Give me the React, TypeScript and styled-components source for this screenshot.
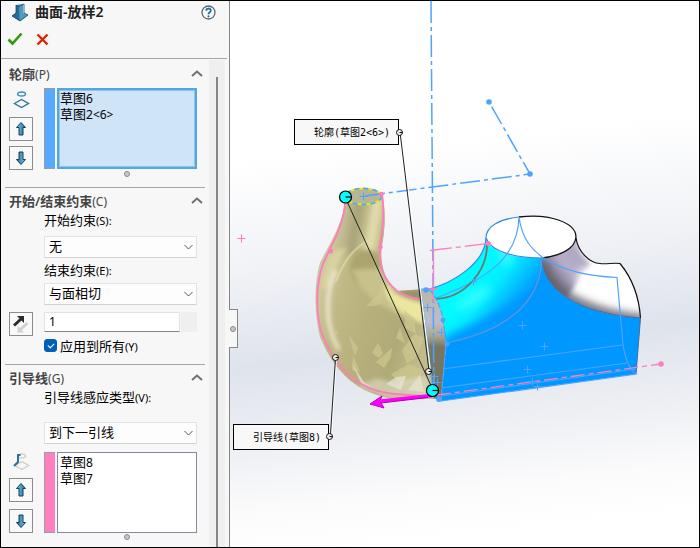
import React, { useState } from "react";
import styled, { createGlobalStyle } from "styled-components";

const Global = createGlobalStyle`
  *, *::before, *::after { box-sizing: border-box; }
  body {
    margin: 0;
    font-family: "Noto Sans", "Noto Sans CJK SC", sans-serif;
    font-size: 13px;
    color: #000;
  }
  button, input, select { font: inherit; color: inherit; margin: 0; }
`;

const Window = styled.div`
  display: flex;
  height: 100vh;
  min-height: 548px;
  border: 1px solid #000;
  background: #fff;
`;

const Panel = styled.aside`
  flex: none;
  width: 229px;
  display: flex;
  flex-direction: column;
  background: #f7f7f7;
  border-right: 1px solid #868686;
`;

const TitleBar = styled.header`
  display: flex;
  align-items: center;
  height: 23px;
  padding: 0 13px 0 10px;
  gap: 6px;
`;

const Title = styled.h1`
  flex: 1;
  margin: 0;
  font-size: 14px;
  line-height: 18px;
  padding-bottom: 2px;
  font-weight: 600;
  color: #222;
`;

const PlainButton = styled.button`
  display: flex;
  padding: 0;
  border: 0;
  background: none;
`;

const Actions = styled.div`
  display: flex;
  align-items: center;
  gap: 13px;
  height: 34px;
  padding: 0 6px 4px;
`;

const Scroller = styled.div`
  flex: 1;
  display: flex;
  min-height: 0;
  margin-right: 2px;
  border-top: 1px solid #a6a6a6;
`;

const Groups = styled.div`
  flex: 1;
  min-width: 0;
  padding: 0 4px;
`;

const ScrollTrack = styled.div`
  flex: none;
  width: 16px;
  padding: 17px 7px 0;
  margin: 1px 2px 0 0;
  background: #efefef;
  display: flex;
`;

const ScrollThumb = styled.div`
  flex: 1;
  background: #858585;
`;

const Group = styled.section`
  padding-bottom: 9px;
  & + & { border-top: 1px solid #a8a8a8; }
`;

const GroupHead = styled.h2<{ $first?: boolean }>`
  display: flex;
  align-items: center;
  justify-content: space-between;
  margin: 0;
  padding: 0 2px 0 4px;
  height: ${(p) => (p.$first ? 29 : 25)}px;
  font-size: 13px;
  font-weight: 500;
  color: #444;
`;

const Key = styled.span`
  font-size: 11px;
  font-weight: 400;
`;

const HeadKey = styled(Key)`
  font-size: 12px;
`;

const Heading = styled.span`
  font-weight: 600;
`;

const Row = styled.div`
  display: flex;
  align-items: flex-start;
  padding-right: 8px;
`;

const Gutter = styled.div<{ $loose?: boolean }>`
  flex: none;
  width: 39px;
  padding-left: 4px;
  display: flex;
  flex-direction: column;
  gap: ${(p) => (p.$loose ? 7 : 5)}px;
`;

const GlyphCell = styled.div<{ $short?: boolean }>`
  width: 24px;
  height: ${(p) => (p.$short ? 19 : 24)}px;
  display: grid;
  place-items: center;
`;

const IconButton = styled.button`
  width: 24px;
  height: 24px;
  padding: 0;
  display: grid;
  place-items: center;
  border: 1px solid #8c8c8c;
  background: #f9f9f9;
`;

const ColorBar = styled.div<{ $color: string }>`
  flex: none;
  width: 11px;
  height: 81px;
  margin-right: 2px;
  border: 1px solid #a09aa0;
  border-right: 0;
  background: ${(p) => p.$color};
`;

const ListBox = styled.ul<{ $active?: boolean }>`
  flex: 1;
  height: 81px;
  margin: 0;
  padding: ${(p) => (p.$active ? "0 1px" : "1px 2px")};
  list-style: none;
  border: ${(p) => (p.$active ? "2px solid #4fa9e0" : "1px solid #858aa0")};
  box-shadow: ${(p) => (p.$active ? "inset 0 0 0 1px #90c4ec" : "none")};
  background: ${(p) => (p.$active ? "#d0e4f8" : "#fff")};
`;

const ListItem = styled.li`
  height: 16px;
  line-height: 16px;
  white-space: nowrap;
`;

const Small = styled.span`
  font-size: 12px;
`;

const Grip = styled.div`
  width: 6px;
  height: 6px;
  margin: 1px 75px 1px auto;
  border: 1px solid #8a8a8a;
  border-radius: 50%;
  background: #c8c8c8;
`;

const Field = styled.div`
  padding: 0 8px 0 39px;
`;

const Label = styled.label<{ $gap: number }>`
  display: block;
  height: 20px;
  line-height: 14px;
  margin-bottom: ${(p) => p.$gap}px;
`;

const SelectWrap = styled.div<{ $gap: number }>`
  position: relative;
  height: 22px;
  margin-bottom: ${(p) => p.$gap}px;
  svg {
    position: absolute;
    right: 4px;
    top: 8px;
    pointer-events: none;
  }
`;

const Select = styled.select`
  appearance: none;
  display: block;
  width: 100%;
  height: 22px;
  padding: 0 20px 2px 4px;
  border: 1px solid #e2e2e2;
  border-bottom-color: #d2d2d2;
  border-radius: 1px;
  background: #fdfdfd;
`;

const NumberInput = styled.input`
  flex: 1;
  min-width: 0;
  height: 20px;
  padding: 0 4px 2px;
  font-size: 12px;
  border: 1px solid #e2e2e2;
  border-bottom-color: #868686;
  border-radius: 1px;
  background: #fff;
`;

const Spinner = styled.div`
  width: 16px;
  height: 20px;
  margin-left: 1px;
  background: #efefef;
`;

const CheckRow = styled.label`
  display: flex;
  align-items: center;
  gap: 3px;
  height: 19px;
  margin-left: 39px;
`;

const CheckBox = styled.input`
  appearance: none;
  width: 13px;
  height: 13px;
  border-radius: 3px;
  border: 1px solid #005fb8;
  display: grid;
  place-items: center;
  &:checked { background: #005fb8; }
  &:checked::before {
    content: "";
    width: 6px;
    height: 4px;
    margin-top: -2px;
    border-left: 1px solid #fff;
    border-bottom: 1px solid #fff;
    transform: rotate(-45deg);
  }
`;

const Viewport = styled.main`
  position: relative;
  flex: 1;
  min-width: 0;
  background: linear-gradient(174deg, #fff 0%, #fff 27%, #f0f2f6 46%, #dfe3ec 62%, #eef0f4 76%, #fbfbfc 86%, #fff 94%);
`;

const Scene = styled.svg`
  display: block;
  width: 100%;
  height: 100%;
`;

const SplitHandle = styled.button`
  position: absolute;
  left: -1px;
  top: 308px;
  width: 9px;
  height: 39px;
  padding: 0;
  display: grid;
  place-items: center;
  border: 1px solid #868686;
  border-left: 0;
  background: #f7f7f7;
  &::before {
    content: "";
    width: 6px;
    height: 6px;
    border: 1px solid #8a8a8a;
    border-radius: 50%;
    background: #c8c8c8;
  }
`;

const ArrowIcon = ({ down = false }: { down?: boolean }) => (
  <svg width="12" height="16" viewBox="0 0 12 16">
    <defs>
      <linearGradient id="arrowFill" x1="0" x2="1">
        <stop offset="0" stopColor="#7cc4e4" />
        <stop offset="1" stopColor="#1d6f9c" />
      </linearGradient>
    </defs>
    <path
      d="M6 1.5 10.5 6.5H8V14H4V6.5H1.5Z"
      transform={down ? "rotate(180 6 8)" : undefined}
      fill="url(#arrowFill)"
      stroke="#123f5c"
      strokeLinejoin="round"
    />
  </svg>
);

const Caret = () => (
  <svg width="12" height="7" viewBox="0 0 12 7" fill="none" stroke="#707070" strokeWidth="2">
    <path d="M1 6 6 1.5 11 6" />
  </svg>
);

const DropCaret = () => (
  <svg width="9" height="6" viewBox="0 0 9 6" fill="none" stroke="#555">
    <path d="M.5 1 4.5 5 8.5 1" />
  </svg>
);

const LoftIcon = () => (
  <svg width="18" height="19" viewBox="0 0 18 19">
    <path d="M5 2 12 1V10L17 12 9 18 1 13 5 10Z" fill="#3d87ad" />
    <path d="M5 2 8 3V15L9 18 1 13 5 10Z" fill="#2a6a8f" />
    <path d="M8 3 12 1V10L17 12 9 18Z" fill="#4c9bc0" />
    <path d="M5 2.5 8 3.5 13 1M5 2V10L1 13 9 18 17 12 13 10V1" fill="none" stroke="#1c4a68" strokeWidth=".8" />
  </svg>
);

const HelpIcon = () => (
  <svg width="15" height="15" viewBox="0 0 15 15">
    <circle cx="7.5" cy="7.5" r="6.5" fill="#fafafa" stroke="#5c6670" strokeWidth="1.3" />
    <path d="M5.2 5.8C5.2 2.8 9.8 2.8 9.8 5.6 9.8 7.3 7.5 7.3 7.5 9.2" fill="none" stroke="#1f7199" strokeWidth="1.8" />
    <circle cx="7.5" cy="11.3" r="1.1" fill="#1f7199" />
  </svg>
);

const ProfileIcon = () => (
  <svg width="17" height="18" viewBox="0 0 17 18" fill="none" stroke="#2a7394" strokeWidth="1.4">
    <ellipse cx="8.5" cy="3" rx="4" ry="2" stroke="#3490b6" />
    <path d="M1.5 12.5 8.5 8.5 15.5 12.5 8.5 16.5Z" />
  </svg>
);

const GuideIcon = () => (
  <svg width="17" height="18" viewBox="0 0 17 18" fill="none" strokeWidth="1.4">
    <ellipse cx="8.5" cy="3" rx="4" ry="2" stroke="#cfcfcf" />
    <path d="M2 12.5 9 8.5 15.5 12.5 9 16.5Z" stroke="#cfcfcf" />
    <path d="M7.5 2H5V9L1 13" stroke="#2a7394" strokeWidth="2" />
  </svg>
);

const ReverseIcon = () => (
  <svg width="18" height="20" viewBox="0 0 18 20">
    <path d="M5 2H12V9L9.500 6.500 3 12.500 1 10.500 7.500 4.500Z" fill="#2b2b2b" />
    <path d="M12 18.500H5.500V12L7.800 14 14.500 8 16.500 10 9.800 16.300Z" fill="#d2d2d2" />
  </svg>
);

const BLUE = "#4fa3ff";
const PINK = "#ff7dbd";

const Cross = ({ x, y, c = BLUE }: { x: number; y: number; c?: string }) => (
  <path d={`M${x - 4} ${y}h8M${x} ${y - 4}v8`} stroke={c} fill="none" />
);

const Handle = ({ x, y }: { x: number; y: number }) => (
  <g stroke="#000" strokeWidth="1.2">
    <circle cx={x} cy={y} r="6" fill="#00ffff" />
    <path d={`M${x} ${y}h6`} />
  </g>
);

const Anchor = ({ x, y }: { x: number; y: number }) => (
  <g stroke="#111">
    <circle cx={x} cy={y} r="3" fill="#eee" />
    <path d={`M${x} ${y}h3`} />
  </g>
);

const SAND_EDGE = "M345 203C344 225 331 246 323 264 315 286 316 316 322 334 337 371 360 391 395 394L434 397";

const Model = () => (
  <Scene viewBox="230 1 469 546" preserveAspectRatio="xMinYMin meet" role="img" aria-label="曲面-放样2">
    <defs>
      <linearGradient id="sand" gradientUnits="userSpaceOnUse" x1="318" y1="300" x2="430" y2="330">
        <stop offset="0" stopColor="#cdc79c" />
        <stop offset=".18" stopColor="#c0b986" />
        <stop offset=".45" stopColor="#b7b07d" />
        <stop offset=".75" stopColor="#b0aa78" />
        <stop offset="1" stopColor="#c2bc8c" />
      </linearGradient>
      <linearGradient id="neck" gradientUnits="userSpaceOnUse" x1="343" y1="225" x2="384" y2="232">
        <stop offset="0" stopColor="#c5bf93" />
        <stop offset=".3" stopColor="#a8a27a" />
        <stop offset=".5" stopColor="#bdb787" />
        <stop offset=".7" stopColor="#e4e0b2" />
        <stop offset=".85" stopColor="#d5cf96" />
        <stop offset="1" stopColor="#b5ae7d" />
      </linearGradient>
      <linearGradient id="cyanFade" gradientUnits="userSpaceOnUse" x1="478" y1="276" x2="519" y2="308">
        <stop offset="0" stopColor="#00fbff" />
        <stop offset=".35" stopColor="#04ecff" />
        <stop offset="1" stopColor="#0098ff" />
      </linearGradient>
      <linearGradient id="section" x1="0" y1="0" x2="0" y2="1">
        <stop offset="0" stopColor="#b9b7a2" />
        <stop offset=".3" stopColor="#bcbccb" />
        <stop offset=".42" stopColor="#aaa893" />
        <stop offset=".52" stopColor="#787763" />
        <stop offset="1" stopColor="#74735f" />
      </linearGradient>
      <linearGradient id="steel" gradientUnits="userSpaceOnUse" x1="545" y1="275" x2="588" y2="242">
        <stop offset="0" stopColor="#6a6876" />
        <stop offset=".4" stopColor="#b7aecb" />
        <stop offset=".7" stopColor="#b0a8c0" />
        <stop offset="1" stopColor="#f0eef5" />
      </linearGradient>
      <filter id="soft4" x="-30%" y="-30%" width="160%" height="160%"><feGaussianBlur stdDeviation="4" /></filter>
      <filter id="soft2" x="-30%" y="-30%" width="160%" height="160%"><feGaussianBlur stdDeviation="2" /></filter>
      <clipPath id="sandClip">
        <path d="M345 197C345 222 329 244 320 263 314 283 314 314 320 337 335 373 358 394 395 399L437 399 430 340 424 289 397 291C386 283 379 265 382 245 386 225 385 205 382 192Z" />
      </clipPath>
      <clipPath id="steelClip">
        <path d="M542 258Q570 252 576 238C578 252 590 263 600 263.500 606 264.500 614 262.500 620 263.500 632 278 639 296 640.500 318 595 315 543 298 542 258Z" />
      </clipPath>
      <clipPath id="cyanClip">
        <path d="M428 289C455 283 485 262 486 238 492 253 517 258 542 258 541 285 525 320 447 343Q443 310 428 289Z" />
      </clipPath>
    </defs>

    <g clipPath="url(#sandClip)">
      <rect x="310" y="180" width="135" height="222" fill="url(#sand)" />
      <path d="M340 185H390V240Q383 252 372 252 352 250 335 262Z" fill="url(#neck)" filter="url(#soft2)" />
      <g filter="url(#soft2)">
        <ellipse cx="366" cy="268" rx="16" ry="18" fill="#aca570" />
        <path d="M352 270Q368 312 432 324L430 306Q396 296 381 268Z" fill="#c7c18c" />
        <path d="M384 282Q400 300 430 304L432 326Q396 318 384 290Z" fill="#ebe79f" />
        <path d="M348 248Q335 262 331 286L322 290Q321 268 335 250Z" fill="#d9d3a2" />
        <path d="M392 291 422 290 424 301Q404 300 388 288Z" fill="#989168" />
      </g>
      <path d="M369 240Q346 252 336 282" fill="none" stroke="#e4dfa8" strokeWidth="2" opacity=".6" />
      <path d="M336 270Q325 292 329 322 332 338 339 350" fill="none" stroke="#f6f3de" strokeWidth="4" opacity=".8" filter="url(#soft2)" />
      <g fill="#cec88f" opacity=".7">
        <path d="M366 306 378 294 388 282 380 304 373 306Z" />
        <path d="M348 334 358 348 355 356Z" />
        <path d="M372 353 378 343 383 353 379 358Z" />
        <path d="M376 362 392 348 391 357 384 368Z" />
        <path d="M396 338 400 327 405 343Z" />
        <path d="M402 350 414 334 424 338 417 356 407 364Z" />
        <path d="M391 374 409 364 423 370 417 382 402 386Z" />
        <path d="M353 356 360 372 352 370Z" />
        <path d="M335 329 339 334 335 334Z" />
        <path d="M404 310 414 318 416 334 405 328Z" />
      </g>
      <path d="M357 386 378 378 393 383 427 375 432 399 385 397Z" fill="#dedec8" opacity=".6" filter="url(#soft2)" />
      <g fill="#e8e6d4" opacity=".7">
        <path d="M386 384 396 377 406 376 401 390Z" />
        <path d="M408 390 420 375 424 392Z" />
        <path d="M352 364 364 382 375 390 361 383Z" />
      </g>
    </g>
    <ellipse cx="363.500" cy="196.500" rx="18" ry="8" fill="#b8b595" stroke="#ece420" strokeWidth="1.800" />
    <ellipse cx="363.500" cy="196.500" rx="18" ry="8" fill="none" stroke={BLUE} strokeWidth="1.800" strokeDasharray="5 4" />
    <path d={SAND_EDGE} fill="none" stroke={PINK} strokeWidth="1.800" />
    <path d="M382 194C385 215 382 230 380 247 379 268 384 280 397 291 410 299 420 300 436 299" fill="none" stroke={PINK} strokeWidth="1.800" />

    <path d="M428 289C455 283 485 262 486 238 492 253 517 258 542 258 543 298 595 315 640.500 318L636 374 441 401 446 345Q443 310 428 289Z" fill="#0098ff" />
    <g clipPath="url(#cyanClip)">
      <rect x="425" y="235" width="120" height="110" fill="url(#cyanFade)" />
      <path d="M436 350 450 334 478 322 502 308 532 290 540 350Z" fill="#0098ff" filter="url(#soft4)" />
      <ellipse cx="506" cy="254" rx="6" ry="12" fill="#5cffff" opacity=".6" filter="url(#soft4)" />
      <ellipse cx="474" cy="298" rx="20" ry="7" fill="#40ffff" opacity=".7" filter="url(#soft4)" transform="rotate(-32 474 298)" />
    </g>
    <g clipPath="url(#steelClip)">
      <rect x="540" y="235" width="105" height="85" fill="#fff" />
      <path d="M540 255 576 235 582 254 591 264 565 300 540 295Z" fill="url(#steel)" filter="url(#soft2)" />
      <path d="M580 270Q606 260 640 270L640 306 606 306Q584 298 577 280Z" fill="#fff" filter="url(#soft4)" />
      <path d="M542 262C547 300 605 317 645 320" fill="none" stroke="#656371" strokeWidth="10" filter="url(#soft4)" />
    </g>
    <ellipse cx="531" cy="237" rx="45" ry="20.500" fill="#fff" />
    <path d="M519 217C550 213 576 223 576 237 575 249 560 256 542 258" fill="none" stroke="#111" strokeWidth="1.300" />
    <path d="M576 238C578 252 590 263 600 263.500 606 264.500 614 262.500 620 263.500 632 278 639 296 640.500 318" fill="none" stroke="#111" strokeWidth="1.200" />
    <path d="M542 258C543 298 595 315 640.500 318L636 374" fill="none" stroke="#456b99" />
    <g fill="none" stroke={BLUE} strokeWidth="1.200">
      <path d="M519 217C500 219 486 226 486 238 492 253 517 258 542 258" stroke="#318be8" />
      <path d="M426 290C455 283 485 262 486 238" stroke="#318be8" />
      <path d="M519 217C518 265 475 284 423 303M519 217C522 240 533 250 542 257 565 272 590 276 617 277.500L623 345Q627 368 636 374" />
      <path d="M542 258C541 295 518 328 447 343" stroke="#6895d8" />
      <path d="M435 370 622 345M441 388 627 363M441 396 636 369M441 401 637 374" />
    </g>
    <path d="M487 245C487 270 466 298 435 299" fill="none" stroke="#78716f" strokeWidth="1.800" />

    <path d="M421 289 430 290Q440 302 443 319L446 344 441 400 434 398Z" fill="url(#section)" stroke={BLUE} strokeWidth="1.200" strokeDasharray="6 2" />

    <g fill="none" stroke={BLUE} strokeWidth="1.500">
      <path d="M431 1 434 400" strokeDasharray="22 4 4 4" />
      <path d="M365 196 530 174 489 102" strokeDasharray="20 4 4 4" />
    </g>
    <g fill={BLUE}>
      <circle cx="530" cy="174" r="2.800" /><circle cx="489" cy="102" r="2.800" />
      <circle cx="426" cy="290" r="2.800" /><circle cx="443" cy="320" r="2.500" /><circle cx="447" cy="344" r="2.500" />
      <circle cx="439" cy="399" r="3" />
    </g>
    <g fill="none" stroke={PINK} strokeWidth="1.300">
      <path d="M430 250.500 488 243.500" strokeDasharray="22 4 5 4" />
      <path d="M433.500 249V302M429 289H438" />
      <path d="M437 395 661 364" strokeDasharray="14 4 5 4" />
    </g>
    <g fill={PINK}>
      <circle cx="488.500" cy="243.500" r="2.500" /><circle cx="661" cy="364" r="2.800" />
      <circle cx="381.500" cy="194" r="2.300" /><circle cx="380.500" cy="247" r="2.300" /><circle cx="330.500" cy="251" r="2.500" />
    </g>
    <Cross x={241.5} y={238.5} c={PINK} />
    <Cross x={363.5} y={196.5} />
    <Cross x={427.5} y={307.5} />
    <Cross x={441.5} y={332.5} />
    <Cross x={522.5} y={325.5} />
    <Cross x={544.5} y={346.5} />
    <Cross x={527.5} y={369.5} />
    <Cross x={532.5} y={381.5} />
    <Cross x={537.5} y={386.5} />
    <Cross x={434.5} y={376.5} />
    <Cross x={437.5} y={382.5} />
    <Cross x={473.5} y={281.5} />

    <path d="M381 401 432 395.500" stroke="#ff00ff" strokeWidth="3.500" />
    <path d="M381 403 428 397.500" stroke="#a800a8" />
    <path d="M370 404 382 396 380 401 384 408Z" fill="#ff00ff" stroke="#c000c0" />

    <g fill="none">
      <path d="M401.500 133 430.500 371M331.500 434 336.500 358" stroke="#fff" />
      <path d="M345 197 433 390M400 132 429 371M330.500 434 335.500 358" stroke="#222" />
    </g>
    <Handle x={345.500} y={197} />
    <Handle x={432.500} y={390.500} />

    <g fontFamily='"DejaVu Sans Mono", "Noto Sans CJK SC", monospace' fontSize="10" fill="#000">
      <rect x="294.500" y="119.500" width="104" height="25" fill="#f8f8f8" stroke="#000" />
      <text x="314" y="136">轮廓(草图2&lt;6&gt;)</text>
      <rect x="233.500" y="424.500" width="95" height="25" fill="#f8f8f8" stroke="#000" />
      <text x="253" y="441">引导线(草图8)</text>
    </g>
    <Anchor x={399.500} y={132.500} />
    <Anchor x={329.500} y={436.500} />
    <Anchor x={335.500} y={357.500} />
    <Anchor x={428.500} y={371.500} />
  </Scene>
);

const GroupTitle = ({ text, hotkey, first }: { text: string; hotkey: string; first?: boolean }) => (
  <GroupHead $first={first}>
    <span><Heading>{text}</Heading><HeadKey>({hotkey})</HeadKey></span>
    <PlainButton aria-label={text}><Caret /></PlainButton>
  </GroupHead>
);

const Picker = ({ id, value, gap }: { id: string; value: string; gap: number }) => (
  <SelectWrap $gap={gap}>
    <Select id={id}><option>{value}</option></Select>
    <DropCaret />
  </SelectWrap>
);

const SketchList = ({ icon, color, items, active, loose }: {
  icon: React.ReactNode; color: string; items: [string, string][]; active?: boolean; loose?: boolean;
}) => (
  <>
    <Row>
      <Gutter $loose={loose}>
        <GlyphCell $short={loose}>{icon}</GlyphCell>
        <IconButton aria-label="上移"><ArrowIcon /></IconButton>
        <IconButton aria-label="下移"><ArrowIcon down /></IconButton>
      </Gutter>
      <ColorBar $color={color} />
      <ListBox $active={active}>
        {items.map(([name, suffix]) => (
          <ListItem key={suffix}>{name}<Small>{suffix}</Small></ListItem>
        ))}
      </ListBox>
    </Row>
    <Grip />
  </>
);

export default function App() {
  const [all, setAll] = useState(true);
  const [length, setLength] = useState("1");
  return (
    <>
      <Global />
      <Window>
        <Panel>
          <TitleBar>
            <LoftIcon />
            <Title>曲面-放样2</Title>
            <PlainButton aria-label="帮助"><HelpIcon /></PlainButton>
          </TitleBar>
          <Actions>
            <PlainButton aria-label="确定">
              <svg width="16" height="14" viewBox="0 0 16 14" fill="none" stroke="#2f9a0c" strokeWidth="2.600">
                <path d="M1.500 7.500 5.500 11.500 14.500 1.500" />
              </svg>
            </PlainButton>
            <PlainButton aria-label="取消">
              <svg width="13" height="13" viewBox="0 0 13 13" fill="none" stroke="#e02200" strokeWidth="2.400">
                <path d="M1.500 1.500 11.500 11.500M11.500 1.500 1.500 11.500" />
              </svg>
            </PlainButton>
          </Actions>
          <Scroller>
            <Groups>
              <Group>
                <GroupTitle first text="轮廓" hotkey="P" />
                <SketchList active icon={<ProfileIcon />} color="#55aaff" items={[["草图", "6"], ["草图", "2<6>"]]} />
              </Group>
              <Group>
                <GroupTitle text="开始/结束约束" hotkey="C" />
                <Field>
                  <Label htmlFor="start" $gap={3}>开始约束<Key>(S):</Key></Label>
                  <Picker id="start" value="无" gap={5} />
                  <Label htmlFor="end" $gap={0}>结束约束<Key>(E):</Key></Label>
                  <Picker id="end" value="与面相切" gap={7} />
                </Field>
                <Row>
                  <Gutter>
                    <IconButton aria-label="反向"><ReverseIcon /></IconButton>
                  </Gutter>
                  <NumberInput aria-label="相切长度" value={length} onChange={(e) => setLength(e.target.value)} />
                  <Spinner />
                </Row>
                <CheckRow>
                  <CheckBox type="checkbox" checked={all} onChange={(e) => setAll(e.target.checked)} />
                  <span>应用到所有<Key>(Y)</Key></span>
                </CheckRow>
              </Group>
              <Group>
                <GroupTitle text="引导线" hotkey="G" />
                <Field>
                  <Label htmlFor="guide" $gap={12}>引导线感应类型<Key>(V):</Key></Label>
                  <Picker id="guide" value="到下一引线" gap={8} />
                </Field>
                <SketchList loose icon={<GuideIcon />} color="#ff80c0" items={[["草图", "8"], ["草图", "7"]]} />
              </Group>
            </Groups>
            <ScrollTrack><ScrollThumb /></ScrollTrack>
          </Scroller>
        </Panel>
        <Viewport>
          <Model />
          <SplitHandle aria-label="收起面板" />
        </Viewport>
      </Window>
    </>
  );
}
